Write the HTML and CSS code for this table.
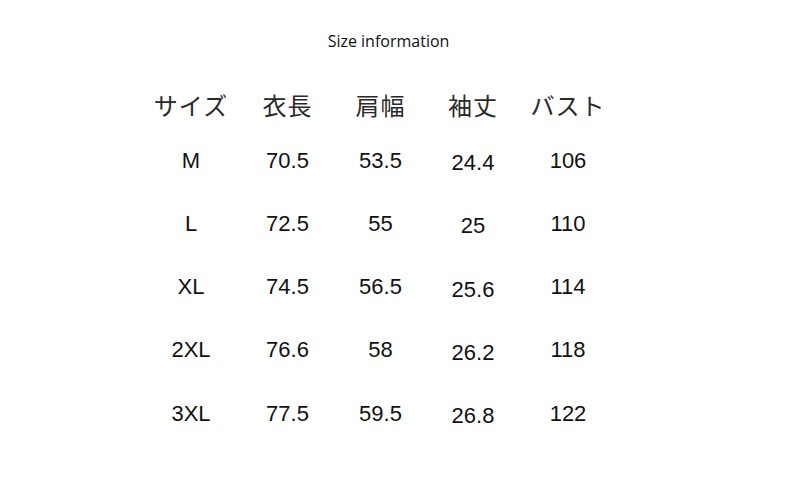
FILE: index.html
```html
<!DOCTYPE html>
<html lang="ja">
<head>
<meta charset="utf-8">
<title>Size information</title>
<link rel="stylesheet" href="styles.css">
</head>
<body>
<div class="page">
  <h1 class="title">Size information</h1>
  <div class="table">
    <div class="cell head">サイズ</div>
    <div class="cell head">衣長</div>
    <div class="cell head">肩幅</div>
    <div class="cell head c4">袖丈</div>
    <div class="cell head">バスト</div>

    <div class="cell">M</div>
    <div class="cell">70.5</div>
    <div class="cell">53.5</div>
    <div class="cell c4">24.4</div>
    <div class="cell">106</div>

    <div class="cell">L</div>
    <div class="cell">72.5</div>
    <div class="cell">55</div>
    <div class="cell c4">25</div>
    <div class="cell">110</div>

    <div class="cell">XL</div>
    <div class="cell">74.5</div>
    <div class="cell">56.5</div>
    <div class="cell c4">25.6</div>
    <div class="cell">114</div>

    <div class="cell">2XL</div>
    <div class="cell">76.6</div>
    <div class="cell">58</div>
    <div class="cell c4">26.2</div>
    <div class="cell">118</div>

    <div class="cell">3XL</div>
    <div class="cell">77.5</div>
    <div class="cell">59.5</div>
    <div class="cell c4">26.8</div>
    <div class="cell">122</div>
  </div>
</div>
</body>
</html>
```
FILE: styles.css
```css
html, body {
  margin: 0;
  padding: 0;
  background: #ffffff;
}
.page {
  width: 790px;
  height: 495px;
  display: flex;
  flex-direction: column;
}
.title {
  margin: 0;
  padding-top: 30px;
  height: 22px;
  line-height: 22px;
  font-family: "Open Sans", "Noto Sans", sans-serif;
  font-weight: 400;
  font-size: 16px;
  color: #111111;
  text-align: center;
  padding-right: 13px;
}
.table {
  margin-top: 29px;
  margin-left: 142px;
  display: grid;
  grid-template-columns: 98px 95px 91px 94px 96px;
  grid-template-rows: 48px repeat(5, 63.25px);
  font-family: "Liberation Sans", Arial, sans-serif;
  font-size: 22px;
  color: #111111;
}
.cell {
  display: flex;
  align-items: center;
  justify-content: center;
  line-height: 1;
}
.head {
  font-family: "Noto Sans CJK JP", "Noto Sans", sans-serif;
  font-size: 24px;
  color: #2a2a2a;
  letter-spacing: 1px;
}
.c4 {
  padding-top: 5px;
}
.head.c4 {
  padding-top: 0;
}
```
